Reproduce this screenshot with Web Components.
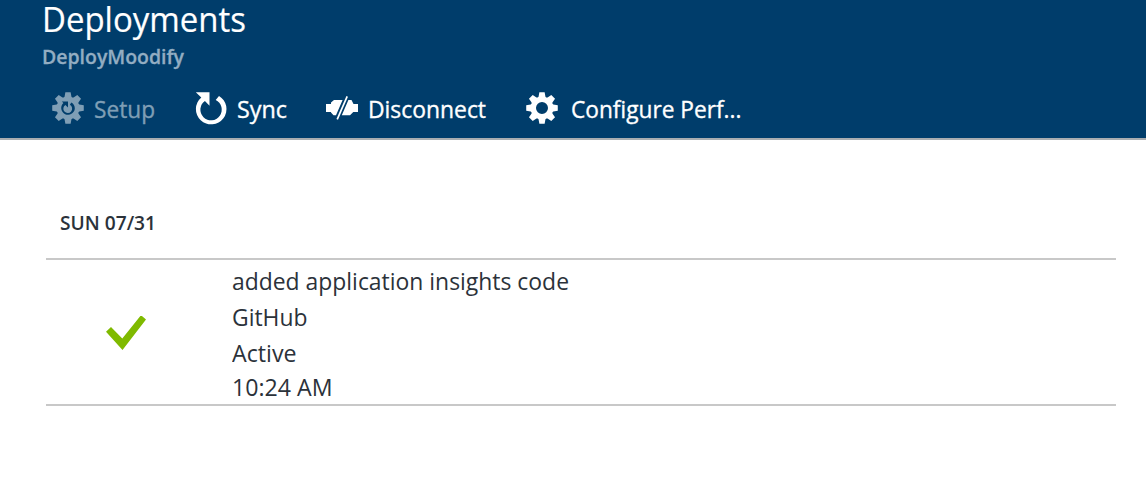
<!DOCTYPE html>
<html lang="en">
<head>
<meta charset="utf-8">
<title>Deployments</title>
<style>
html,body{margin:0;height:100%;background:#fff;overflow:hidden}
body{font-family:"Open Sans","Noto Sans",sans-serif;color:#2b323a}
</style>
</head>
<body>
<deployments-blade></deployments-blade>
<script>
const define = (name, html, setup) => {
  const t = document.createElement('template');
  t.innerHTML = html;
  customElements.define(name, class extends HTMLElement {
    connectedCallback() {
      if (this.shadowRoot) return;
      this.attachShadow({mode: 'open'}).append(t.content.cloneNode(true));
      if (setup) setup(this, this.shadowRoot);
    }
  });
};

/* Text label whose glyphs are condensed to a given advance width. */
define('fit-label', `
<style>
:host{display:block;white-space:nowrap}
span{display:inline-block;transform-origin:0 50%;vertical-align:top}
</style><span><slot></slot></span>`, (el, root) => {
  const s = root.querySelector('span');
  const w = +el.getAttribute('width');
  s.style.transform = 'scaleX(' + w / s.getBoundingClientRect().width + ')';
  el.style.width = w + 'px';
});

const gear = (() => {
  let d = '';
  for (let i = 0; i < 8; i++) {
    [[-23, 11.3], [-17, 11.8], [-9.5, 16], [9.5, 16], [17, 11.8]].forEach(([a, r], k) => {
      const q = (i * 45 + a) * Math.PI / 180;
      d += (i || k ? 'L' : 'M') + (16 + r * Math.sin(q)).toFixed(2) + ' ' + (16 - r * Math.cos(q)).toFixed(2);
    });
  }
  return d + 'Z';
})();
const icons = {
  gear: `<path fill-rule="evenodd" d="${gear}M22 16A6 6 0 1 0 10 16A6 6 0 1 0 22 16Z"/>`,
  setup: `<path fill-rule="evenodd" d="${gear}M22.8 16.4A6.8 6.8 0 0 0 19.3 10.5L17.9 12.8A4.4 4.4 0 1 1 13.4 12.9L16 15.4V9.4H9.8L11.4 11A6.8 6.8 0 1 0 22.8 16.4Z"/>`,
  sync: `<path transform="translate(.5 0)" d="M.3 .3H14V13.8L9.4 8.9A10.7 10.7 0 1 0 20.2 8L23.5 3.9A15.3 15.3 0 1 1 5.8 5.4Z"/>`,
  disconnect: `<path d="M0 12H5V10.5L8 8H16.6L10 23.3H7.5L5 20.5V20H0ZM32 12H27.5L25.5 8H22.4L15.8 23.3H24L27.3 20H32Z"/><path fill="none" stroke="currentColor" stroke-width="1.7" d="M21.2 4.3L11.2 27.3"/>`
};
define('ui-icon', `<style>:host{display:block;width:32px;height:32px}svg{display:block;fill:currentColor;overflow:visible}</style>
<svg width="32" height="32" viewBox="0 0 32 32"></svg>`, (el, root) => {
  root.querySelector('svg').innerHTML = icons[el.getAttribute('name')];
});

define('tool-button', `
<style>
:host{display:flex;align-items:center;color:#fff;font-size:24px;font-weight:500;line-height:34px;-webkit-text-stroke:.35px currentColor}
:host([disabled]){color:#7f9eb5}
slot[name=icon]{display:block}
.t{margin:2px 0 0 var(--gap,10px);line-height:32px}
</style><slot name="icon"></slot><div class="t"><slot></slot></div>`);

define('blade-header', `
<style>
:host{display:flow-root;box-sizing:border-box;height:140px;background:#003d6b;border-bottom:2px solid #a9adb0;padding-left:42px}
.title{color:#fff;font-size:35.5px;line-height:37px;font-weight:400;-webkit-text-stroke:.2px currentColor}
.sub{color:#93adc2;font-size:20px;line-height:28px;font-weight:600;margin-top:6px;-webkit-text-stroke:.3px currentColor}
.bar{display:flex;margin:20px 0 0 10px}
</style>
<div class="title"><slot name="title"></slot></div>
<div class="sub"><slot name="subtitle"></slot></div>
<div class="bar"><slot></slot></div>`);

define('deployment-row', `
<style>
:host{display:grid;grid-template-columns:186px 1fr;box-sizing:border-box;height:148px;border-top:2px solid #c8c8c8;border-bottom:2px solid #c8c8c8;font-size:23.5px;line-height:36px}
.state{padding:56px 0 0 60px}
svg{display:block}
.info{padding-top:3px}
.time{line-height:32px}
</style>
<div class="state"><svg width="40" height="34" viewBox="0 0 40 34"><path fill="#7fba00" d="M0 15.8L5 11L16.3 22.5L35 -.8L40 3.5L16.5 34Z"/></svg></div>
<div class="info"><slot></slot><div class="time"><slot name="time"></slot></div></div>`);

define('deployment-group', `
<style>
:host{display:block;padding:68px 30px 0 46px}
h2{margin:0 0 21px 14px;font-size:19.5px;line-height:29px;font-weight:600}
</style>
<h2><slot name="date"></slot></h2><slot></slot>`);

define('deployments-blade', `
<style>
:host{display:block}
.c{margin-left:40px}.d{margin-left:39px}.e{margin-left:40px;--gap:13px}
</style>
<blade-header>
<fit-label slot="title" width="204">Deployments</fit-label>
<fit-label slot="subtitle" width="142">DeployMoodify</fit-label>
<tool-button disabled><ui-icon slot="icon" name="setup"></ui-icon><fit-label width="61">Setup</fit-label></tool-button>
<tool-button class="c"><ui-icon slot="icon" name="sync"></ui-icon><fit-label width="50">Sync</fit-label></tool-button>
<tool-button class="d"><ui-icon slot="icon" name="disconnect"></ui-icon><fit-label width="118">Disconnect</fit-label></tool-button>
<tool-button class="e"><ui-icon slot="icon" name="gear"></ui-icon><fit-label width="170.5">Configure Perf...</fit-label></tool-button>
</blade-header>
<deployment-group>
<fit-label slot="date" width="96">SUN 07/31</fit-label>
<deployment-row>
<fit-label width="337">added application insights code</fit-label>
<fit-label width="75.5">GitHub</fit-label>
<fit-label width="64.5">Active</fit-label>
<fit-label slot="time" width="100.5">10:24 AM</fit-label>
</deployment-row>
</deployment-group>`);
</script>
</body>
</html>
